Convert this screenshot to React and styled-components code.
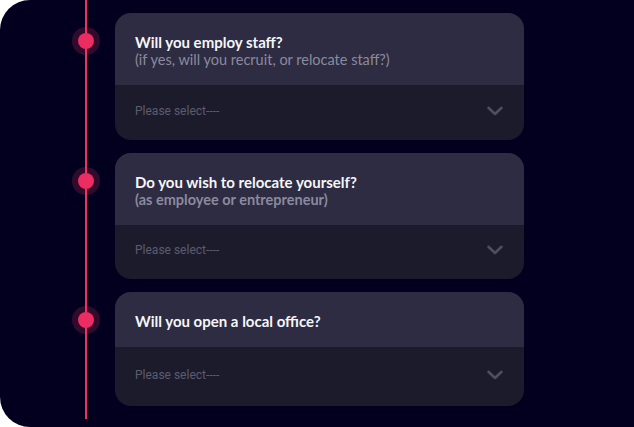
import React from "react";
import styled, {createGlobalStyle} from "styled-components";

const Global = createGlobalStyle`
   html, body {
      margin: 0;
      padding: 0;
      background: #ffffff;
   }
`;

const Page = styled.div`
   width: 634px;
   height: 427px;
   box-sizing: border-box;
   background: #03001f;
   border-radius: 30px 0 0 30px;
   padding: 13px 0 0 72px;
   overflow: hidden;
`;

const List = styled.div`
   position: relative;
   display: flex;
   flex-direction: column;
   gap: 13px;
   &::before {
      content: "";
      position: absolute;
      left: 13px;
      top: -13px;
      width: 1.5px;
      height: 419px;
      background: #f0325f;
   }
`;

const Row = styled.div`
   display: flex;
   align-items: flex-start;
   gap: 15px;
`;

const Marker = styled.div`
   position: relative;
   width: 28px;
   height: 28px;
   margin-top: 14px;
   flex-shrink: 0;
   border-radius: 50%;
   background: rgba(240, 50, 95, 0.2);
   display: flex;
   align-items: center;
   justify-content: center;
`;

const Dot = styled.span`
   width: 16px;
   height: 16px;
   border-radius: 50%;
   background: #ec2d62;
`;

const Card = styled.div`
   width: 409px;
   border-radius: 16px;
   overflow: hidden;
   background: #1c1b2c;
`;

const Header = styled.div`
   background: #2d2c42;
   padding: 20px 20px 17px 20px;
   font-family: Lato, "Open Sans", sans-serif;
`;

const Title = styled.div`
   font-size: 15px;
   line-height: 18px;
   font-weight: 700;
   color: #f6f6f8;
`;

const Sub = styled.div`
   font-size: 14.5px;
   line-height: 17px;
   font-weight: ${(p) => (p.$bold ? 700 : 400)};
   color: #8b8a9e;
`;

const Select = styled.div`
   height: ${(p) => p.$h}px;
   box-sizing: border-box;
   display: flex;
   align-items: center;
   justify-content: space-between;
   padding: 0 21px 4px 20px;
`;

const Placeholder = styled.span`
   font-family: Roboto, "Liberation Sans", sans-serif;
   font-size: 12px;
   color: #5d5c6f;
`;

const Chevron = () => (
   <svg width="16" height="10" viewBox="0 0 16 10" fill="none">
      <path
         d="M1.5 1.8 L8 8 L14.5 1.8"
         stroke="#4e4d61"
         strokeWidth="2.6"
         strokeLinecap="round"
         strokeLinejoin="round"
      />
   </svg>
);

const questions = [
   {title: "Will you employ staff?", sub: "(if yes, will you recruit, or relocate staff?)", h: 55},
   {title: "Do you wish to relocate yourself?", sub: "(as employee or entrepreneur)", bold: true, h: 54},
   {title: "Will you open a local office?", h: 59},
];

const App = () => {
   return (
      <>
         <Global />
         <Page>
            <List>
               {questions.map((q) => (
                  <Row key={q.title}>
                     <Marker>
                        <Dot />
                     </Marker>
                     <Card>
                        <Header>
                           <Title>{q.title}</Title>
                           {q.sub && <Sub $bold={q.bold}>{q.sub}</Sub>}
                        </Header>
                        <Select $h={q.h}>
                           <Placeholder>Please select----</Placeholder>
                           <Chevron />
                        </Select>
                     </Card>
                  </Row>
               ))}
            </List>
         </Page>
      </>
   );
};

export default App;
